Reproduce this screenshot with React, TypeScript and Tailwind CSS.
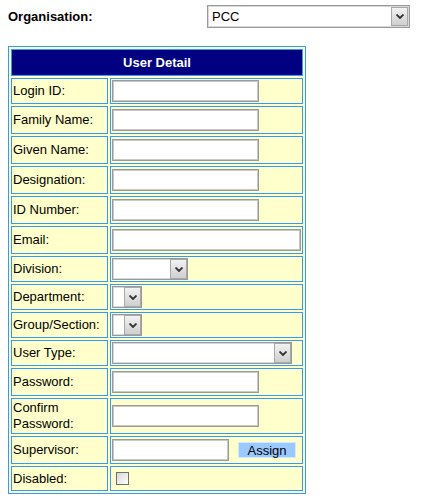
import React from "react";

function Chevron() {
    return (
        <svg width="8" height="5" viewBox="0 0 8 5" className="block">
            <path d="M0.5 0.5 L4 4 L7.5 0.5" fill="none" stroke="#303030" strokeWidth="1.8" />
        </svg>
    );
}

function DropButton() {
    return (
        <div className="w-[17px] h-full flex items-center justify-center border border-[#a8a8a8] bg-gradient-to-b from-[#f2f2f2] to-[#cfcfcf]">
            <Chevron />
        </div>
    );
}

function FakeSelect({ className }: { className: string }) {
    return (
        <div className={`h-[22px] flex justify-end bg-white border border-[#9a9a9a] shadow-[inset_0_0_0_1px_#d8d8d8] ${className}`}>
            <DropButton />
        </div>
    );
}

function TextBox({ className }: { className: string }) {
    return (
        <input
            type="text"
            className={`block h-[22px] bg-white border border-[#9a9a9a] shadow-[inset_0_0_0_1px_#c8c8c8] outline-none ${className}`}
        />
    );
}

type Row = {
    label: React.ReactNode;
    h: string;
    field: React.ReactNode;
};

const rows: Row[] = [
    { label: "Login ID:", h: "h-[26px]", field: <TextBox className="w-[147px]" /> },
    { label: "Family Name:", h: "h-[28px]", field: <TextBox className="w-[147px]" /> },
    { label: "Given Name:", h: "h-[28px]", field: <TextBox className="w-[147px]" /> },
    { label: "Designation:", h: "h-[28px]", field: <TextBox className="w-[147px]" /> },
    { label: "ID Number:", h: "h-[28px]", field: <TextBox className="w-[147px]" /> },
    { label: "Email:", h: "h-[28px]", field: <TextBox className="w-[189px]" /> },
    { label: "Division:", h: "h-[26px]", field: <FakeSelect className="w-[76px]" /> },
    { label: "Department:", h: "h-[26px]", field: <FakeSelect className="w-[30px]" /> },
    { label: "Group/Section:", h: "h-[26px]", field: <FakeSelect className="w-[30px]" /> },
    { label: "User Type:", h: "h-[26px]", field: <FakeSelect className="w-[180px]" /> },
    { label: "Password:", h: "h-[28px]", field: <TextBox className="w-[147px]" /> },
    {
        label: (
            <span className="block leading-[16px]">
                Confirm
                <br />
                Password:
            </span>
        ),
        h: "h-[36px]",
        field: <TextBox className="w-[147px]" />,
    },
    {
        label: "Supervisor:",
        h: "h-[28px]",
        field: (
            <div className="flex items-center">
                <TextBox className="w-[117px]" />
                <button className="ml-[9px] w-[58px] h-[16px] leading-[13px] bg-[#99c9ff] border border-[#d6e8ff] text-black text-[13px]">
                    Assign
                </button>
            </div>
        ),
    },
    {
        label: "Disabled:",
        h: "h-[25px]",
        field: <div className="ml-[4px] w-[13px] h-[13px] border border-[#707070] bg-gradient-to-br from-[#d8d8d8] to-white" />,
    },
];

export default function App() {
    return (
        <div className="min-h-screen bg-white font-['Liberation_Sans',Arial,sans-serif] text-[13px] text-black">
            {/* Organisation picker */}
            <div className="flex items-center pt-[5px] pl-[8px]">
                <div className="w-[199px] font-bold">Organisation:</div>
                <div className="w-[203px] h-[23px] flex items-center bg-white border border-[#9a9a9a] shadow-[inset_0_0_0_1px_#d8d8d8]">
                    <span className="flex-1 pl-[4px]">PCC</span>
                    <div className="h-full py-[1px] pr-[1px]">
                        <DropButton />
                    </div>
                </div>
            </div>

            {/* User detail form */}
            <table className="ml-[8px] mt-[18px] w-[298px] bg-[#ffffcc] border border-[#3399ff] border-separate border-spacing-[2px]">
                <tbody>
                    <tr>
                        <td colSpan={2} className="h-[27px] p-0 bg-[#000080] border border-[#3399ff] text-white font-bold text-center align-middle">
                            User Detail
                        </td>
                    </tr>
                    {rows.map((r, i) => (
                        <tr key={i}>
                            <td className={`${r.h} w-[98px] p-[1px] border border-[#3399ff] align-middle`}>{r.label}</td>
                            <td className={`${r.h} p-[1px] border border-[#3399ff] align-middle`}>{r.field}</td>
                        </tr>
                    ))}
                </tbody>
            </table>
        </div>
    );
}
